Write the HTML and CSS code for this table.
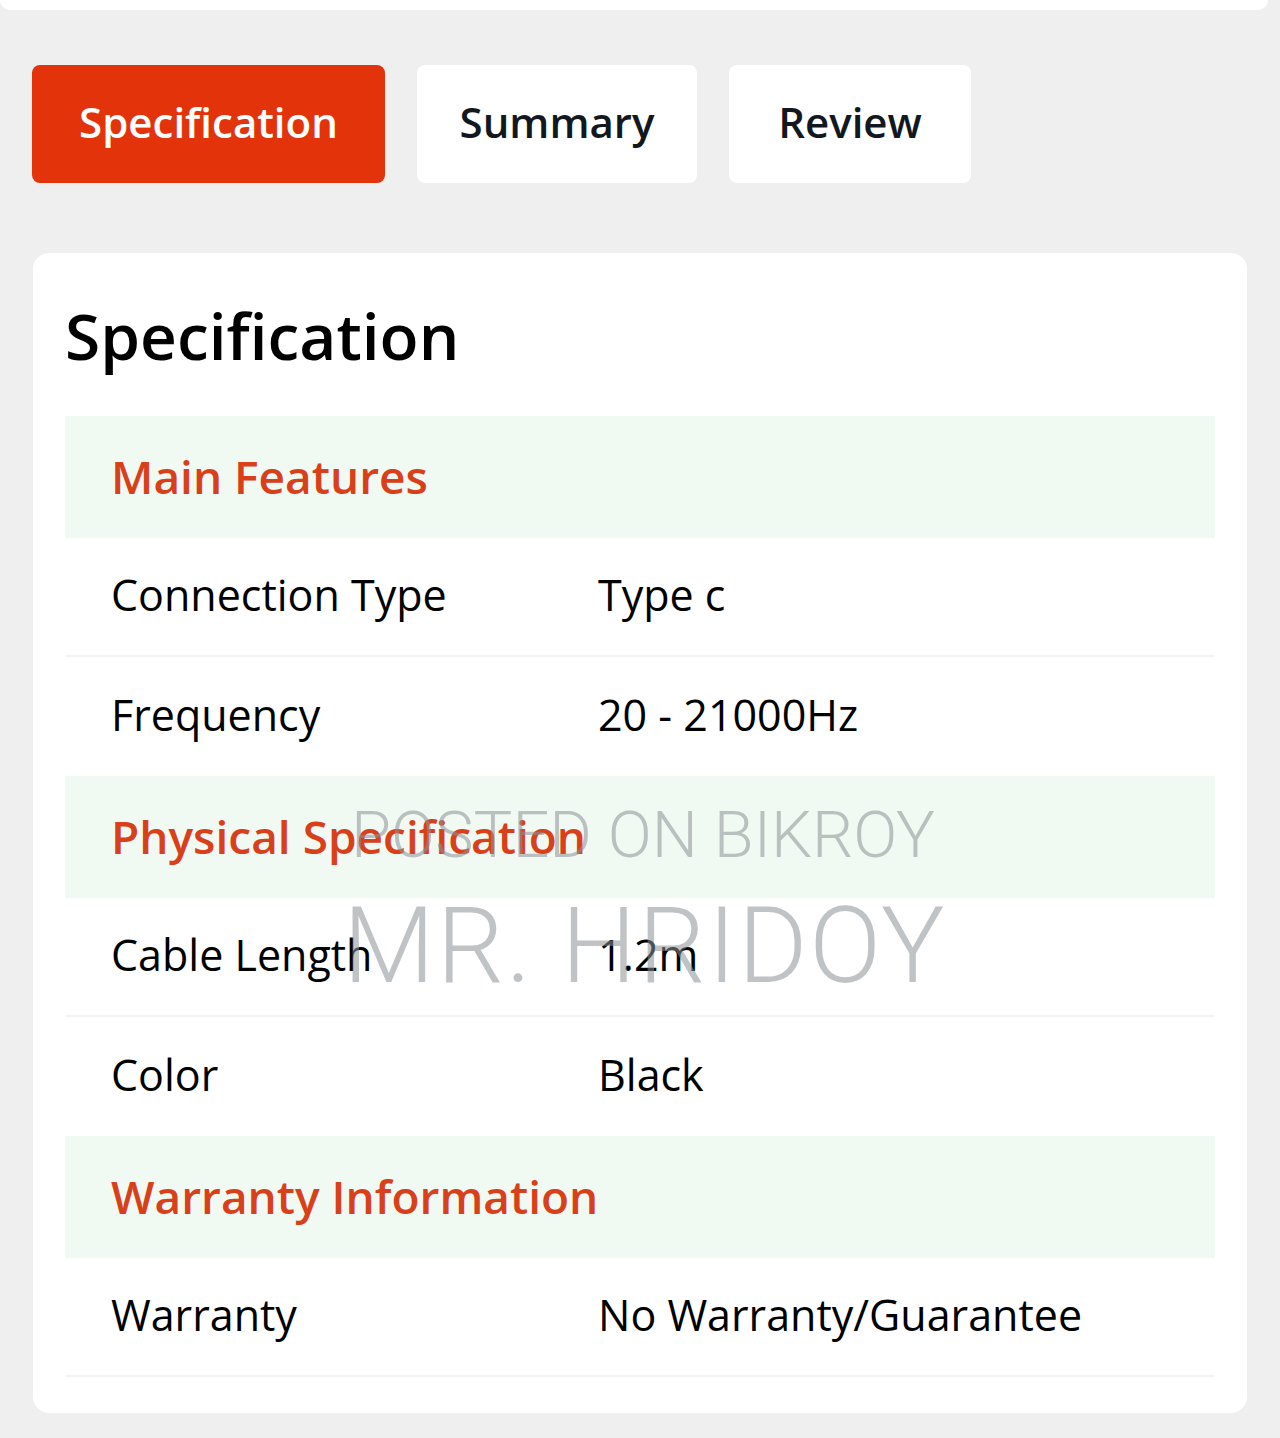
FILE: index.html
```html
<!DOCTYPE html>
<html>
<head>
<meta charset="utf-8">
<link rel="stylesheet" href="styles.css">
</head>
<body>
<div class="topcard"></div>
<div class="tabs">
  <div class="tab active tab-spec">Specification</div>
  <div class="tab tab-summary">Summary</div>
  <div class="tab tab-review">Review</div>
</div>
<div class="card">
  <h1 class="title">Specification</h1>
  <div class="table">
    <div class="section">Main Features</div>
    <div class="row"><div class="label">Connection Type</div><div class="value">Type c</div></div>
    <div class="row"><div class="label">Frequency</div><div class="value">20 - 21000Hz</div></div>
    <div class="section">Physical Specification</div>
    <div class="row"><div class="label">Cable Length</div><div class="value">1.2m</div></div>
    <div class="row"><div class="label">Color</div><div class="value">Black</div></div>
    <div class="section">Warranty Information</div>
    <div class="row"><div class="label">Warranty</div><div class="value">No Warranty/Guarantee</div></div>
  </div>
  <div class="watermark">
    <div class="wm1">POSTED ON BIKROY</div>
    <div class="wm2">MR. HRIDOY</div>
  </div>
</div>
</body>
</html>
```
FILE: styles.css
```css
html, body {
  margin: 0;
  padding: 0;
  background: #efefef;
  font-family: "Open Sans", "Noto Sans", sans-serif;
  color: #000;
}
.topcard {
  height: 10px;
  width: 1268px;
  background: #fff;
  border-radius: 0 0 16px 16px;
}
.tabs {
  display: flex;
  gap: 32px;
  padding: 55px 0 0 32px;
  height: 118px;
}
.tab {
  background: #fff;
  border-radius: 8px;
  display: flex;
  align-items: center;
  justify-content: center;
  font-size: 42px;
  font-weight: 600;
  color: #111820;
  height: 118px;
  padding-bottom: 6px;
  box-sizing: border-box;
}
.tab-spec { width: 353px; }
.tab-summary { width: 280px; }
.tab-review { width: 242px; }
.tab.active {
  background: #e3330a;
  color: #fff;
}
.card {
  position: relative;
  margin: 70px 33px 0 33px;
  width: 1214px;
  background: #fff;
  border-radius: 16px;
  padding: 40px 32px 36px 32px;
  box-sizing: border-box;
}
.title {
  margin: 0 0 37px 0;
  font-size: 64px;
  font-weight: 600;
  line-height: 86px;
}
.table {
  display: flex;
  flex-direction: column;
}
.section {
  background: #f0f9f2;
  height: 122px;
  display: flex;
  align-items: center;
  padding-left: 46px;
  padding-bottom: 2px;
  box-sizing: border-box;
  font-size: 46px;
  font-weight: 600;
  color: #d9401a;
}
.row {
  display: flex;
  align-items: center;
  padding-left: 46px;
  padding-bottom: 4px;
  box-sizing: content-box;
  font-size: 43px;
  border-bottom: 2px solid #f3f3f3;
  height: 113px;
}
.section + .row + .row { border-bottom: none; height: 115px; }
.label { width: 487px; }
.watermark {
  position: absolute;
  left: 310px;
  top: 533px;
  font-family: Roboto, sans-serif;
  font-weight: 300;
  color: rgba(140, 145, 150, 0.55);
  pointer-events: none;
}
.wm1 {
  font-size: 65px;
  line-height: 90px;
  padding-left: 8px;
  padding-top: 4px;
}
.wm2 {
  font-size: 106px;
  line-height: 120px;
  letter-spacing: 2px;
  padding-top: 6px;
}
```
